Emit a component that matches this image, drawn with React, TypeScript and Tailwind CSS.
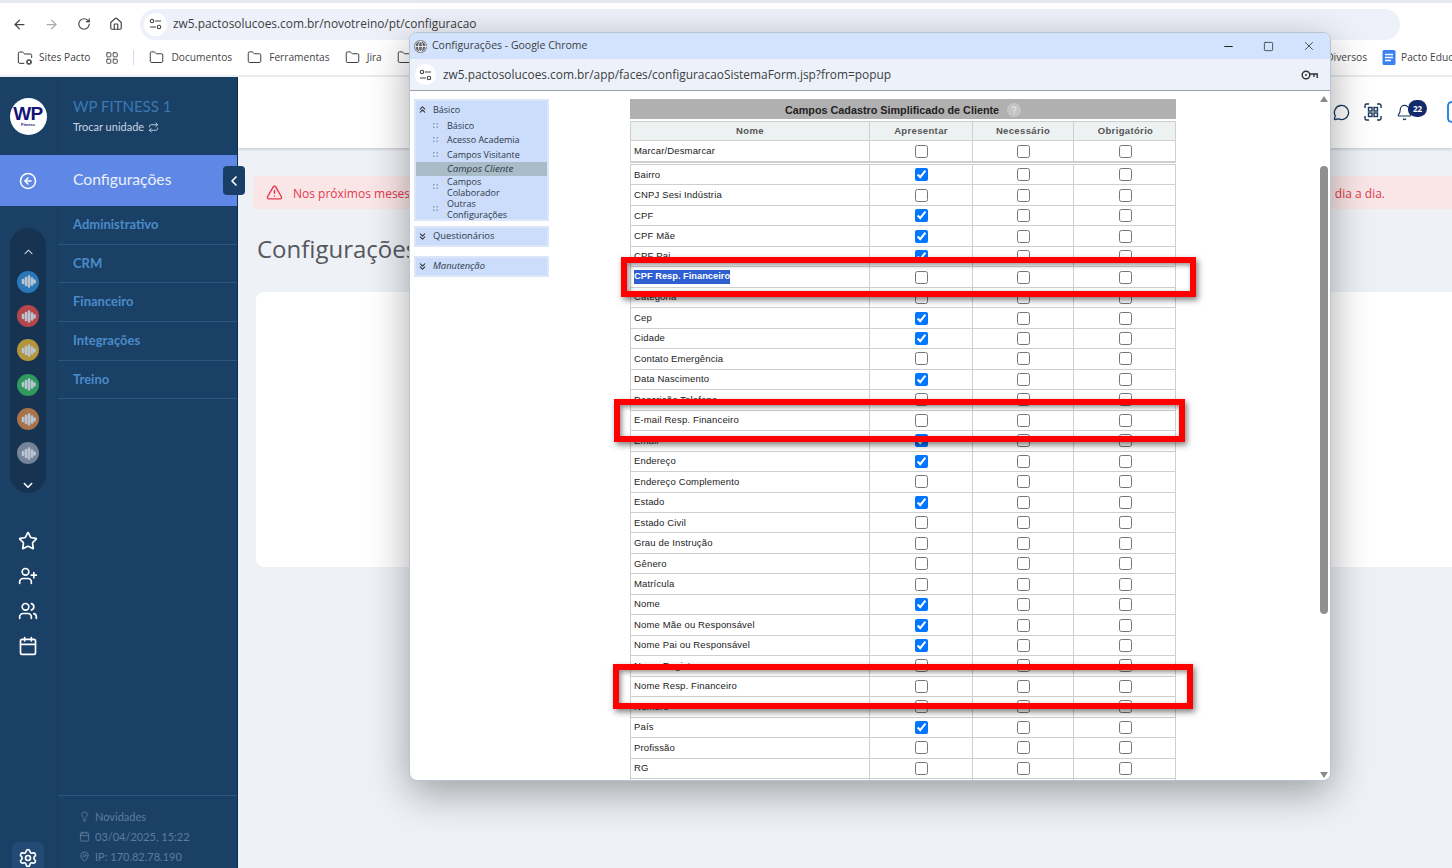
import {
  ArrowLeft,
  ArrowRight,
  Bell,
  Calendar,
  ChevronDown,
  ChevronLeft,
  ChevronUp,
  ChevronsDown,
  ChevronsUp,
  CircleArrowLeft,
  Folder,
  FolderCog,
  Globe,
  House,
  LayoutGrid,
  Lightbulb,
  MapPin,
  MessageCircle,
  Minus,
  Repeat,
  RotateCw,
  Settings,
  Square,
  Star,
  TriangleAlert,
  UserPlus,
  Users,
  X
} from 'lucide-react'

const rows: [string, boolean][] = [
  ['Bairro', true],
  ['CNPJ Sesi Indústria', false],
  ['CPF', true],
  ['CPF Mãe', true],
  ['CPF Pai', true],
  ['CPF Resp. Financeiro', false],
  ['Categoria', false],
  ['Cep', true],
  ['Cidade', true],
  ['Contato Emergência', false],
  ['Data Nascimento', true],
  ['Descrição Telefone', false],
  ['E-mail Resp. Financeiro', false],
  ['Email', true],
  ['Endereço', true],
  ['Endereço Complemento', false],
  ['Estado', true],
  ['Estado Civil', false],
  ['Grau de Instrução', false],
  ['Gênero', false],
  ['Matrícula', false],
  ['Nome', true],
  ['Nome Mãe ou Responsável', true],
  ['Nome Pai ou Responsável', true],
  ['Nome Registro', false],
  ['Nome Resp. Financeiro', false],
  ['Número', false],
  ['País', true],
  ['Profissão', false],
  ['RG', false],
  ['', false] // linha cortada pela janela
]

const menu = ['Administrativo', 'CRM', 'Financeiro', 'Integrações', 'Treino']

const modules = ['bg-[#2a78b8]', 'bg-[#b5474b]', 'bg-[#b3963a]', 'bg-[#2f9a5c]', 'bg-[#a8734a]', 'bg-[#76849a]']

function TuneIcon() {
  return (
    <svg width="13" height="12" viewBox="0 0 13 12" fill="none" stroke="#444" strokeWidth="1.1">
      <circle cx="3" cy="3" r="1.7" />
      <path d="M6 3h6M1 9h6" />
      <circle cx="10" cy="9" r="1.7" />
    </svg>
  )
}

function KeyIcon() {
  return (
    <svg width="17" height="10" viewBox="0 0 17 10" fill="none" stroke="#333" strokeWidth="1.4">
      <circle cx="5" cy="5" r="3.8" />
      <circle cx="5" cy="5" r="1" fill="#333" stroke="none" />
      <path d="M8.8 4h7.4v4M13 4v3" />
    </svg>
  )
}

function QrIcon() {
  return (
    <svg width="18" height="18" viewBox="0 0 18 18" fill="none" stroke="currentColor" strokeWidth="1.4">
      <path d="M1 5V2.5A1.5 1.5 0 0 1 2.5 1H5M13 1h2.5A1.5 1.5 0 0 1 17 2.500V5M17 13v2.500a1.500 1.500 0 0 1-1.500 1.500H13M5 17H2.500A1.500 1.500 0 0 1 1 15.500V13" />
      <rect x="4.500" y="4.500" width="3.500" height="3.500" />
      <rect x="10" y="4.500" width="3.500" height="3.500" />
      <rect x="4.500" y="10" width="3.500" height="3.500" />
      <rect x="10" y="10" width="3.500" height="3.500" />
    </svg>
  )
}

function ModuleGlyph() {
  return (
    <svg width="15" height="13" viewBox="0 0 15 13" stroke="#b9c4d2" strokeWidth="2.6" strokeLinecap="round">
      <path d="M2 5v3M5 3v7M8 1.5v10M11 3.5v6M13.5 5.5v2" />
    </svg>
  )
}

function DotsIcon() {
  return (
    <svg width="5" height="5" viewBox="0 0 5 5" fill="#8ba0ba">
      <rect width="1.500" height="1.500" />
      <rect x="3.500" width="1.500" height="1.500" />
      <rect y="3.500" width="1.500" height="1.500" />
      <rect x="3.500" y="3.500" width="1.500" height="1.500" />
    </svg>
  )
}

function Box({ checked }: { checked?: boolean }) {
  return <input type="checkbox" readOnly checked={!!checked} className="m-0 block h-[13px] w-[13px]" />
}

function Bookmark({ label }: { label: string }) {
  return (
    <div className="flex items-center gap-[7px]">
      <Folder size={15} strokeWidth={1.5} className="text-[#333]" />
      <span>{label}</span>
    </div>
  )
}

function BrowserBars() {
  return (
    <div className="shrink-0 bg-white font-['Open_Sans',sans-serif] text-[#444]">
      <div className="h-[3px] bg-[#e6eaf0]" />
      <div className="flex h-[37px] items-center pl-[12px] pr-[52px] pt-[5px]">
        <ArrowLeft size={15} className="text-[#444]" />
        <ArrowRight size={15} className="ml-[17px] text-[#aaa]" />
        <RotateCw size={14} className="ml-[18px] text-[#444]" />
        <House size={14} className="ml-[18px] text-[#444]" />
        <div className="ml-[17px] flex h-[31px] flex-1 items-center rounded-full bg-[#eef1f9] pl-[4px]">
          <span className="flex h-[23px] w-[23px] items-center justify-center rounded-full bg-white">
            <TuneIcon />
          </span>
          <span className="ml-[6px] text-[11.9px] text-[#3c4043]">zw5.pactosolucoes.com.br/novotreino/pt/configuracao</span>
        </div>
      </div>
      <div className="flex h-[37px] items-center gap-[15px] border-b-2 border-[#eceff3] pl-[17px] text-[10.2px]">
        <div className="flex items-center gap-[6px]">
          <FolderCog size={16} strokeWidth={1.5} className="text-[#333]" />
          <span>Sites Pacto</span>
        </div>
        <LayoutGrid size={14} strokeWidth={1.6} className="text-[#444]" />
        <span className="-ml-px h-[15px] w-px bg-[#cfdcf3]" />
        <Bookmark label="Documentos" />
        <Bookmark label="Ferramentas" />
        <Bookmark label="Jira" />
        <Folder size={15} strokeWidth={1.5} className="text-[#333]" />
        <div className="ml-auto flex items-center gap-[15px]">
          <Bookmark label="Diversos" />
          <div className="flex w-[70px] items-center gap-[5px] overflow-hidden whitespace-nowrap">
            <svg width="14" height="15" viewBox="0 0 14 15" className="shrink-0">
              <rect x="0.5" width="13" height="15" rx="1.5" fill="#3b82f0" />
              <path d="M3 4.5h8M3 7.5h8M3 10.5h6" stroke="#fff" strokeWidth="1.3" />
            </svg>
            <span>Pacto Educ</span>
          </div>
        </div>
      </div>
    </div>
  )
}

function Sidebar() {
  return (
    <aside className="flex w-[238px] shrink-0 border-r border-[#102f58] bg-[#1b4066] font-['Lato',sans-serif]">
      <div className="flex w-[58px] shrink-0 flex-col items-center border-r border-[#173a5e]">
        <div className="mr-px flex h-[78px] items-center justify-center">
          <div className="flex h-[37px] w-[37px] flex-col items-center justify-center rounded-full bg-white pt-[2px] font-['Liberation_Sans',sans-serif] font-bold text-[#14147a]">
            <span className="text-[19px] leading-[16px] tracking-[-0.5px]">WP</span>
            <span className="text-[4px] leading-[6px]">Fitness</span>
          </div>
        </div>
        <div className="flex h-[51px] w-[58px] items-center justify-center bg-[#5f88e6] pr-px text-white">
          <CircleArrowLeft size={18} strokeWidth={2} />
        </div>
        <div className="mr-px mt-[22px] flex h-[265px] w-[36px] flex-col items-center rounded-[18px] bg-[#163352] pt-[17px] text-white">
          <ChevronUp size={17} className="text-[#c3cdd8]" />
          <div className="mt-[12px] flex flex-col gap-[12.3px]">
            {modules.map((c) => (
              <span key={c} className={`flex h-[22px] w-[22px] items-center justify-center rounded-full ${c}`}>
                <ModuleGlyph />
              </span>
            ))}
          </div>
          <ChevronDown size={18} strokeWidth={2.5} className="mt-[14px]" />
        </div>
        <div className="mr-px mt-[38px] flex flex-col items-center gap-[15px] text-white">
          <Star size={20} strokeWidth={2} />
          <UserPlus size={20} strokeWidth={2} />
          <Users size={20} strokeWidth={2} />
          <Calendar size={20} strokeWidth={2} />
        </div>
        <div className="mr-px mt-auto flex h-[26px] w-[32px] items-start justify-center rounded-t-[6px] bg-[#224a75] pt-[6px] text-white">
          <Settings size={20} strokeWidth={2} />
        </div>
      </div>
      <div className="flex min-w-0 flex-1 flex-col">
        <div className="h-[78px] pl-[15px] pt-[20px]">
          <div className="text-[15px] leading-[18px] text-[#3a78b4]">WP FITNESS 1</div>
          <div className="mt-[5px] flex items-center gap-[4px] text-[11px] leading-[14px] text-[#c8d4e2]">
            Trocar unidade <Repeat size={11} />
          </div>
        </div>
        <div className="relative flex h-[51px] items-center bg-[#5f88e6] pb-[1px] pl-[15px] text-[15.7px] text-[#eaf0fb]">
          Configurações
          <span className="absolute right-[-8px] top-[11px] flex h-[29px] w-[22px] items-center justify-center rounded-[4px] bg-[#1a3f66] text-white">
            <ChevronLeft size={16} strokeWidth={2.5} />
          </span>
        </div>
        {menu.map((m) => (
          <div key={m} className="flex h-[38.7px] items-center border-b border-[#2a5682] pl-[15px] text-[13px] font-bold text-[#4a8bc9]">
            {m}
          </div>
        ))}
        <div className="mt-auto flex h-[73px] flex-col gap-[5px] border-t border-[#2a5682] pl-[21px] pt-[13px] text-[11px] leading-[15px] text-[#5b7c9c]">
          <div className="flex items-center gap-[5px]"><Lightbulb size={11} /> Novidades</div>
          <div className="flex items-center gap-[5px]"><Calendar size={11} /> 03/04/2025, 15:22</div>
          <div className="flex items-center gap-[5px]"><MapPin size={11} /> IP: 170.82.78.190</div>
        </div>
      </div>
    </aside>
  )
}

function Main() {
  return (
    <main className="flex min-w-0 flex-1 flex-col bg-[#eef1f6] font-['Open_Sans',sans-serif]">
      <header className="flex h-[71px] shrink-0 items-center justify-end overflow-hidden bg-white shadow-[0_1px_3px_rgba(0,0,0,0.2)]">
        <div className="relative flex items-center gap-[14px] pb-[1px] text-[#17365c]">
          <MessageCircle size={17} strokeWidth={1.8} />
          <QrIcon />
          <Bell size={17} strokeWidth={1.6} />
          <span className="absolute left-[75px] top-[-1px] flex h-[17px] w-[19px] items-center justify-center rounded-full bg-[#12296b] text-[8px] font-bold text-white">22</span>
          <span className="ml-[20px] h-[22px] w-[5px] rounded-l-full border-y-2 border-l-2 border-[#2a8ae0]" />
        </div>
      </header>
      <div className="ml-[15px] mt-[28px] flex h-[33px] items-center justify-between bg-[#fbe6e7] pl-[13px] pr-[67px] text-[12px] text-[#e2394d]">
        <div className="flex items-center gap-[10px]">
          <TriangleAlert size={17} />
          <span className="pt-[3px]">Nos próximos meses</span>
        </div>
        <span className="pt-[3px]">dia a dia.</span>
      </div>
      <h1 className="ml-[19px] mt-[23px] text-[24px] leading-[33px] text-[#55585e]">Configurações</h1>
      <div className="ml-[18px] mt-[27px] h-[275px] rounded-l-[8px] bg-white" />
    </main>
  )
}

function PopupNavPanel({ label, italic }: { label: string; italic?: boolean }) {
  return (
    <div className="flex h-[21px] items-center gap-[5px] border-2 border-[#dbe6fb] bg-[#ccdcfb] pl-[1px] text-[9.4px]">
      <ChevronsDown size={11} strokeWidth={2.2} className="text-[#222]" />
      <span className={italic ? 'italic' : ''}>{label}</span>
    </div>
  )
}

function NavItem({ lines, active }: { lines: string[]; active?: boolean }) {
  return (
    <div className={`flex items-center pl-[17px] ${active ? 'bg-[#aabbc8] py-[1.5px] text-[9.7px] italic' : ''}`}>
      <span className={`w-[14px] ${active ? 'invisible' : ''}`}>
        <DotsIcon />
      </span>
      <span className="leading-[11px]">
        {lines.map((l) => (
          <div key={l}>{l}</div>
        ))}
      </span>
    </div>
  )
}

function PopupNav() {
  return (
    <nav className="w-[135px] shrink-0 font-['Open_Sans',sans-serif] text-[9px] text-[#2d3a48]">
      <div className="h-[122px] border-2 border-[#dbe6fb] bg-[#ccdcfb]">
        <div className="flex h-[17px] items-center gap-[5px] pl-[1px]">
          <ChevronsUp size={11} strokeWidth={2.2} className="text-[#222]" />
          <span>Básico</span>
        </div>
        <div className="flex flex-col">
          <div className="py-[1.75px]"><NavItem lines={['Básico']} /></div>
          <div className="py-[1.75px]"><NavItem lines={['Acesso Academia']} /></div>
          <div className="py-[1.75px]"><NavItem lines={['Campos Visitante']} /></div>
          <NavItem lines={['Campos Cliente']} active />
          <NavItem lines={['Campos', 'Colaborador']} />
          <NavItem lines={['Outras', 'Configurações']} />
        </div>
      </div>
      <div className="mt-[5px]"><PopupNavPanel label="Questionários" /></div>
      <div className="mt-[9px]"><PopupNavPanel label="Manutenção" italic /></div>
    </nav>
  )
}

const gridCols = 'grid grid-cols-[239px_103px_101px_103px]'

function ConfigTable() {
  return (
    <div className="ml-[81px] w-[546px] shrink-0 font-['Liberation_Sans',sans-serif] text-[9.5px] tracking-[0.15px] text-[#222]">
      <div className="flex h-[20px] items-center justify-center gap-[8px] bg-[#b0b0b0] pt-[2px] text-[10.8px] font-bold tracking-normal text-[#222]">
        Campos Cadastro Simplificado de Cliente
        <span className="flex h-[14px] w-[14px] items-center justify-center rounded-full bg-[#c4c4c4] text-[10px] text-[#dedede]">?</span>
      </div>
      <div className={`${gridCols} mt-[2px] h-[20px] items-stretch border border-[#cfcfcf] bg-[#eef1f2] text-center font-bold tracking-[0.35px] text-[#555]`}>
        {['Nome', 'Apresentar', 'Necessário', 'Obrigatório'].map((h) => (
          <div key={h} className="flex items-center justify-center border-r border-[#cfcfcf] last:border-r-0">{h}</div>
        ))}
      </div>
      <div className={`${gridCols} h-[22px] border-x border-b-2 border-[#cfcfcf]`}>
        <div className="flex items-center border-r border-[#cfcfcf] pl-[3px]">Marcar/Desmarcar</div>
        <div className="flex items-center justify-center border-r border-[#cfcfcf]"><Box /></div>
        <div className="flex items-center justify-center border-r border-[#cfcfcf]"><Box /></div>
        <div className="flex items-center justify-center"><Box /></div>
      </div>
      <div className="mt-[1px] border-x border-t border-[#cfcfcf]">
        {rows.map(([name, on]) => (
          <div key={name} className={`${gridCols} h-[20.48px] border-b border-[#cfcfcf]`}>
            <div className="flex items-center border-r border-[#cfcfcf] pl-[3px]">
              {name === 'CPF Resp. Financeiro' ? (
                <span className="bg-[#2e5fd0] text-[9.3px] font-bold tracking-normal text-white">{name}</span>
              ) : (
                name
              )}
            </div>
            <div className="flex items-center justify-center border-r border-[#cfcfcf]"><Box checked={on} /></div>
            <div className="flex items-center justify-center border-r border-[#cfcfcf]"><Box /></div>
            <div className="flex items-center justify-center"><Box /></div>
          </div>
        ))}
      </div>
    </div>
  )
}

function Scrollbar() {
  return (
    <div className="-mt-[8px] ml-auto flex w-[12px] shrink-0 flex-col items-center self-stretch bg-white pb-[2px] pt-[5px]">
      <span className="h-0 w-0 border-x-[4.5px] border-b-[6px] border-x-transparent border-b-[#8a8a8a]" />
      <span className="mt-[64px] h-[448px] w-[8px] rounded-full bg-[#8f8f8f]" />
      <span className="mt-auto h-0 w-0 border-x-[4.5px] border-t-[6px] border-x-transparent border-t-[#8a8a8a]" />
    </div>
  )
}

function Popup() {
  return (
    <section className="absolute left-[409px] top-[32px] flex h-[749px] w-[922px] flex-col overflow-hidden rounded-[8px] border border-[#b9c3d3] bg-white font-['Open_Sans',sans-serif] shadow-[0_12px_40px_rgba(0,0,0,0.35)]">
      <div className="flex h-[26px] shrink-0 items-center bg-[#d3e3fd] pl-[4px] text-[#3c4043]">
        <Globe size={13} strokeWidth={1.5} className="rounded-full bg-[#5f6368] text-white" />
        <span className="ml-[5px] text-[10.5px]">Configurações - Google Chrome</span>
        <div className="ml-auto flex items-center gap-[28px] pr-[14px] text-[#222]">
          <Minus size={13} />
          <Square size={11} strokeWidth={1.6} />
          <X size={14} strokeWidth={1.3} />
        </div>
      </div>
      <div className="flex h-[32px] shrink-0 items-center border-b border-[#9aa0a6] bg-[#edf2fa] pl-[5px] pr-[12px] text-[#3c4043]">
        <span className="flex h-[21px] w-[21px] items-center justify-center rounded-full bg-white">
          <TuneIcon />
        </span>
        <span className="ml-[7px] text-[11.9px]">zw5.pactosolucoes.com.br/app/faces/configuracaoSistemaForm.jsp?from=popup</span>
        <span className="ml-auto"><KeyIcon /></span>
      </div>
      <div className="flex min-h-0 flex-1 overflow-hidden pl-[4px] pt-[8px]">
        <PopupNav />
        <ConfigTable />
        <Scrollbar />
      </div>
    </section>
  )
}

function Callout({ className }: { className: string }) {
  return (
    <div className={`absolute border-[6px] border-[#ff0000] shadow-[2px_3px_6px_rgba(0,0,0,0.5),inset_2px_2px_5px_rgba(0,0,0,0.45)] ${className}`} />
  )
}

export default function App() {
  return (
    <div className="relative flex h-[868px] w-[1452px] flex-col overflow-hidden bg-white">
      <BrowserBars />
      <div className="flex min-h-0 flex-1">
        <Sidebar />
        <Main />
      </div>
      <Popup />
      <Callout className="left-[621px] top-[257px] h-[40px] w-[575px]" />
      <Callout className="left-[614px] top-[399px] h-[43px] w-[571px]" />
      <Callout className="left-[613px] top-[664px] h-[45px] w-[580px]" />
    </div>
  )
}
